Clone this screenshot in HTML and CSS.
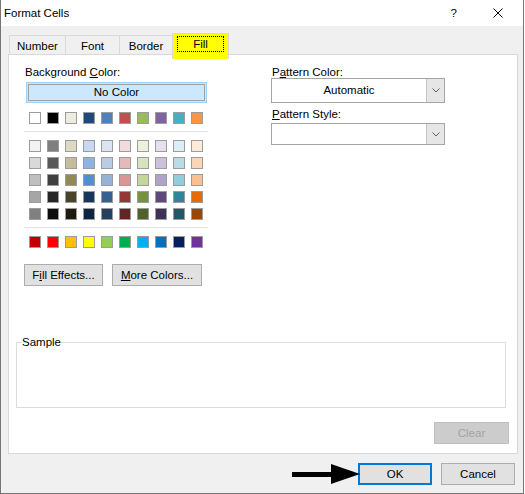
FILE: index.html
```html
<!DOCTYPE html>
<html lang="en">
<head>
<meta charset="UTF-8">
<title>Format Cells</title>
<link rel="stylesheet" href="styles.css">
</head>
<body>
<div class="window">
    <div class="titlebar">
        <span class="title">Format Cells</span>
        <span class="help">?</span>
        <svg class="close" width="10" height="10" viewBox="0 0 10 10">
            <path d="M0.5 0.5 L9.5 9.5 M9.5 0.5 L0.5 9.5" stroke="#000" stroke-width="1" fill="none"/>
        </svg>
    </div>

    <!-- pestañas -->
    <div class="tabs">
        <div class="tab tab-number">Number</div>
        <div class="tab tab-font">Font</div>
        <div class="tab tab-border">Border</div>
        <div class="tab tab-fill active"><span class="focus">Fill</span></div>
    </div>

    <div class="panel">
        <div class="columns">
            <div class="col-left">
                <div class="label">Background <u>C</u>olor:</div>
                <div class="no-color"><div class="no-color-inner">No Color</div></div>
                <div class="swatch-row" id="row-base"></div>
                <div class="sep"></div>
                <div class="swatch-grid" id="grid-tints"></div>
                <div class="sep"></div>
                <div class="swatch-row" id="row-standard"></div>
                <div class="btn-row">
                    <div class="btn btn-effects">F<u>i</u>ll Effects...</div>
                    <div class="btn btn-more"><u>M</u>ore Colors...</div>
                </div>
            </div>
            <div class="col-right">
                <div class="label">P<u>a</u>ttern Color:</div>
                <div class="dropdown dd-color">
                    <div class="dd-text">Automatic</div>
                    <div class="dd-btn"><svg width="8" height="5" viewBox="0 0 8 5"><path d="M0.5 0.5 L4 4 L7.5 0.5" stroke="#606060" fill="none"/></svg></div>
                </div>
                <div class="label label-style"><u>P</u>attern Style:</div>
                <div class="dropdown dd-style">
                    <div class="dd-text"></div>
                    <div class="dd-btn"><svg width="8" height="5" viewBox="0 0 8 5"><path d="M0.5 0.5 L4 4 L7.5 0.5" stroke="#606060" fill="none"/></svg></div>
                </div>
            </div>
        </div>

        <fieldset class="sample">
            <legend>Sample</legend>
            <div class="sample-body"></div>
        </fieldset>

        <div class="clear-row">
            <div class="btn btn-clear">Clear</div>
        </div>
    </div>

    <div class="footer">
        <svg class="arrow" width="68" height="20" viewBox="0 0 68 20">
            <rect x="0" y="8" width="41" height="5" fill="#000"/>
            <polygon points="39,0 68,10 39,20" fill="#000"/>
        </svg>
        <div class="btn btn-ok">OK</div>
        <div class="btn btn-cancel">Cancel</div>
    </div>
</div>
<script>
// colores del tema
const base = ['#ffffff','#000000','#eeece1','#1f497d','#4f81bd','#c0504d','#9bbb59','#8064a2','#4bacc6','#f79646'];
const tints = [
    ['#f2f2f2','#7f7f7f','#ddd9c3','#c6d9f0','#dbe5f1','#f2dcdb','#ebf1dd','#e5e0ec','#dbeef3','#fdeada'],
    ['#d9d9d9','#595959','#c4bd97','#8db3e2','#b8cce4','#e5b9b7','#d7e3bc','#ccc1d9','#b7dde8','#fbd5b5'],
    ['#bfbfbf','#404040','#938953','#548dd4','#95b3d7','#d99694','#c3d69b','#b2a2c7','#92cddc','#fac08f'],
    ['#a6a6a6','#262626','#494429','#17365d','#366092','#953734','#76923c','#5f497a','#31859b','#e36c09'],
    ['#808080','#0d0d0d','#1d1b10','#0f243e','#244061','#632423','#4f6128','#3f3151','#205867','#974806']
];
const standard = ['#c00000','#ff0000','#ffc000','#ffff00','#92d050','#00b050','#00b0f0','#0070c0','#002060','#7030a0'];

function swatches(list) {
    let cad = '';
    for (let i = 0; i < list.length; i++) {
        cad += `<span class="swatch" style="background:${list[i]}"></span>`;
    }
    return cad;
}

document.getElementById('row-base').innerHTML = swatches(base);
document.getElementById('row-standard').innerHTML = swatches(standard);
let rows = '';
for (let r = 0; r < tints.length; r++) {
    rows += `<div class="swatch-row">${swatches(tints[r])}</div>`;
}
document.getElementById('grid-tints').innerHTML = rows;
</script>
</body>
</html>
```

FILE: styles.css
```css
* {
    box-sizing: border-box;
}

body {
    margin: 0;
    background: #fff;
    font-family: "Liberation Sans", Arial, sans-serif;
    font-size: 11.5px;
    line-height: 15px;
    color: #000;
}

u {
    text-underline-offset: 1px;
}

/* Ventana */
.window {
    width: 524px;
    height: 494px;
    border: 1px solid #767676;
    border-top: none;
    background: #f0f0f0;
    display: flex;
    flex-direction: column;
}

.titlebar {
    height: 26px;
    flex: none;
    background: #fff;
    display: flex;
    align-items: center;
    padding-left: 3px;
}

.title {
    flex: 1;
}

.help {
    margin-right: 36px;
}

.close {
    margin-right: 20px;
}

/* Pestañas */
.tabs {
    display: flex;
    align-items: flex-end;
    margin: 7px 0 0 8px;
}

.tab {
    height: 19px;
    padding-top: 3px;
    border: 1px solid #d9d9d9;
    border-bottom: none;
    text-align: center;
    margin-left: -1px;
}

.tab-number {
    width: 57px;
    margin-left: 0;
}

.tab-font {
    width: 55px;
}

.tab-border {
    width: 54px;
}

.tab.active {
    width: 57px;
    height: 26px;
    padding-top: 0;
    margin-bottom: -5px;
    background: #ffff00;
    position: relative;
    z-index: 1;
}

.focus {
    display: block;
    width: 47px;
    height: 16px;
    margin: 2px 0 0 4px;
    border: 1px dotted #000;
    line-height: 14px;
}

/* Marco blanco */
.panel {
    margin-left: 7px;
    width: 510px;
    height: 400px;
    flex: none;
    background: #fff;
    border: 1px solid #d9d9d9;
    padding: 10px 0 0 15px;
}

.columns {
    display: flex;
}

.col-left {
    width: 247px;
}

.col-right {
    width: 174px;
}

.label {
    margin-left: 1px;
}

.no-color {
    margin: 2px 0 0 2px;
    width: 181px;
    height: 21px;
    padding: 1px;
    border: 1px solid #99d1ff;
    background: #cce8ff;
}

.no-color-inner {
    height: 17px;
    border: 1px solid #a0a0a0;
    text-align: center;
    line-height: 15px;
}

.swatch-row {
    display: flex;
    gap: 6px;
    padding-left: 5px;
    height: 12px;
}

#row-base {
    margin-top: 9px;
}

#row-standard {
    margin-top: 8px;
}

.swatch {
    width: 12px;
    height: 12px;
    border: 1px solid #9c9c9c;
}

.sep {
    width: 184px;
    height: 1px;
    margin-top: 7px;
    background: #e3e3e3;
}

.swatch-grid {
    margin-top: 8px;
    display: flex;
    flex-direction: column;
    gap: 5px;
}

.btn {
    height: 22px;
    border: 1px solid #adadad;
    background: #e1e1e1;
    text-align: center;
    line-height: 20px;
}

.btn-row {
    display: flex;
    gap: 9px;
    margin-top: 16px;
}

.btn-effects {
    width: 79px;
}

.btn-more {
    width: 90px;
}

/* Lado derecho */
.dropdown {
    display: flex;
    width: 174px;
    border: 1px solid #a5a5a5;
    background: #fff;
}

.dd-color {
    height: 25px;
    margin-top: -2px;
}

.dd-style {
    height: 22px;
    margin-top: 1px;
}

.label-style {
    margin-top: 4px;
}

.dd-text {
    flex: 1;
    text-align: center;
    line-height: 23px;
}

.dd-btn {
    width: 18px;
    border-left: 1px solid #c4c4c4;
    background: #e6e6e6;
    display: flex;
    align-items: center;
    justify-content: center;
}

/* Muestra */
.sample {
    margin: 49px 0 0 -8px;
    width: 490px;
    padding: 0;
    border: 1px solid #dcdcdc;
    min-width: 0;
}

.sample legend {
    padding: 0;
    margin-left: 5px;
    line-height: 15px;
}

.sample-body {
    height: 57px;
}

.clear-row {
    display: flex;
    justify-content: flex-end;
    margin: 14px 8px 0 0;
}

.btn-clear {
    width: 75px;
    background: #cccccc;
    border-color: #bfbfbf;
    color: #a3a3a3;
}

/* Botones de abajo */
.footer {
    display: flex;
    justify-content: flex-end;
    align-items: center;
    gap: 9px;
    margin-top: 9px;
    padding-right: 8px;
}

.arrow {
    margin-right: -11px;
    position: relative;
    z-index: 1;
}

.btn-ok {
    width: 74px;
    border: 2px solid #0078d7;
    line-height: 18px;
}

.btn-cancel {
    width: 74px;
}
```
